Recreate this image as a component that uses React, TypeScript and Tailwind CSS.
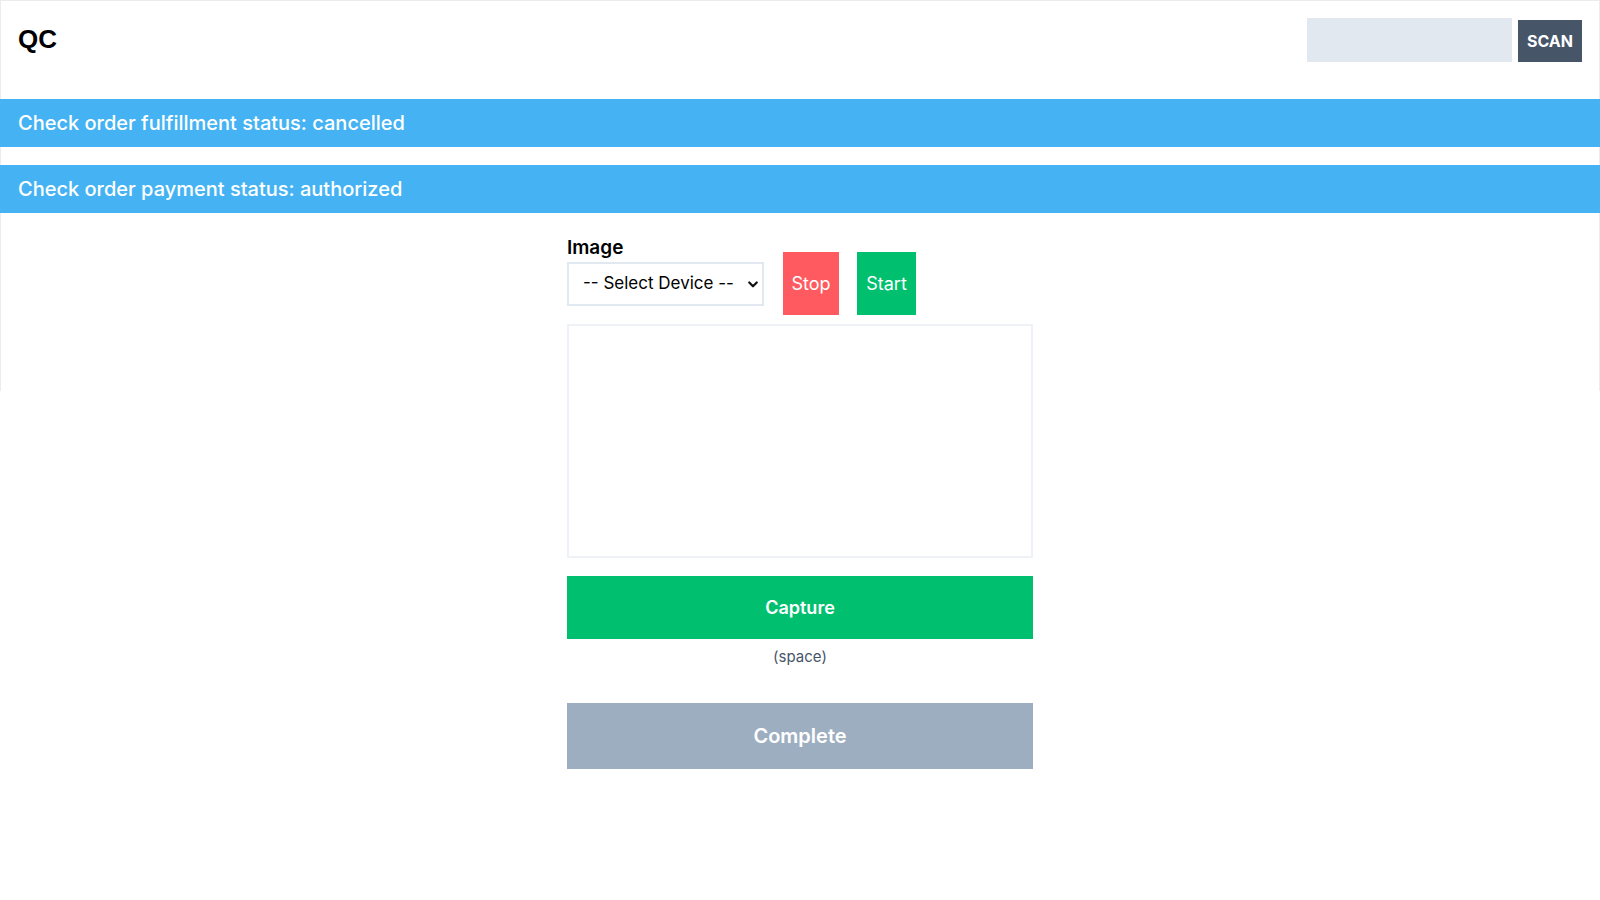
import { useState } from "react";

const banners = [
  "Check order fulfillment status: cancelled",
  "Check order payment status: authorized",
];

export default function App() {
  const [device, setDevice] = useState("");
  const [code, setCode] = useState("");

  return (
    <div className="min-h-screen bg-white text-black font-['Inter','Noto_Sans',sans-serif]">
      <div className="h-[391px] border border-b-0 border-[#ececec]">
        <header className="h-[98px] flex items-start justify-between pl-[17px] pr-[17px] pt-[17px]">
          <h1 className="text-[26px] font-bold mt-[2px] font-['Liberation_Sans',sans-serif]">QC</h1>
          <div className="flex items-center gap-[6px]">
            <input
              value={code}
              onChange={(e) => setCode(e.target.value)}
              className="w-[205px] h-[44px] bg-[#e2e8f0] outline-none px-3"
            />
            <button className="h-[42px] px-[9px] bg-[#475569] text-white font-bold text-base mt-[2px]">
              SCAN
            </button>
          </div>
        </header>

        <div className="flex flex-col gap-[18px] -mx-px">
          {banners.map((b) => (
            <div key={b} className="h-[48px] flex items-center px-[18px] bg-[#45b3f3] text-white text-xl font-medium">
              {b}
            </div>
          ))}
        </div>

        <main className="w-[466px] mx-auto pt-[23px] pb-[60px]">
          <div className="flex items-start">
            <div className="flex flex-col">
              <label className="text-[19px] font-semibold leading-[24px] mb-[2px]">Image</label>
              <div className="relative w-[197px] h-[44px] border-2 border-[#e2e8f0] bg-white">
                <select
                  value={device}
                  onChange={(e) => setDevice(e.target.value)}
                  className="appearance-none w-full h-full bg-transparent pl-[14px] pr-[18px] text-[17px] outline-none"
                >
                  <option value="">-- Select Device --</option>
                </select>
                <svg className="absolute right-[3px] top-[14px] w-[12px] h-[12px] pointer-events-none" viewBox="0 0 16 16" fill="none" stroke="#111" strokeWidth="3" strokeLinecap="round" strokeLinejoin="round">
                  <path d="M3 6l5 5 5-5" />
                </svg>
              </div>
            </div>
            <button className="ml-[19px] mt-[16px] h-[63px] w-[56px] bg-[#ff5a5f] text-white text-lg">Stop</button>
            <button className="ml-[18px] mt-[16px] h-[63px] w-[59px] bg-[#00c070] text-white text-lg">Start</button>
          </div>

          <div className="mt-[9px] h-[234px] border-2 border-[#eef2f7] bg-white" />

          <button className="mt-[18px] w-full h-[63px] bg-[#00c070] text-white text-lg font-semibold">
            Capture
          </button>
          <p className="text-center text-[15px] text-[#475569] mt-[6px] leading-6">(space)</p>

          <button className="mt-[34px] w-full h-[66px] bg-[#9eaec1] text-white text-[20px] font-semibold">
            Complete
          </button>
        </main>
      </div>
    </div>
  );
}
